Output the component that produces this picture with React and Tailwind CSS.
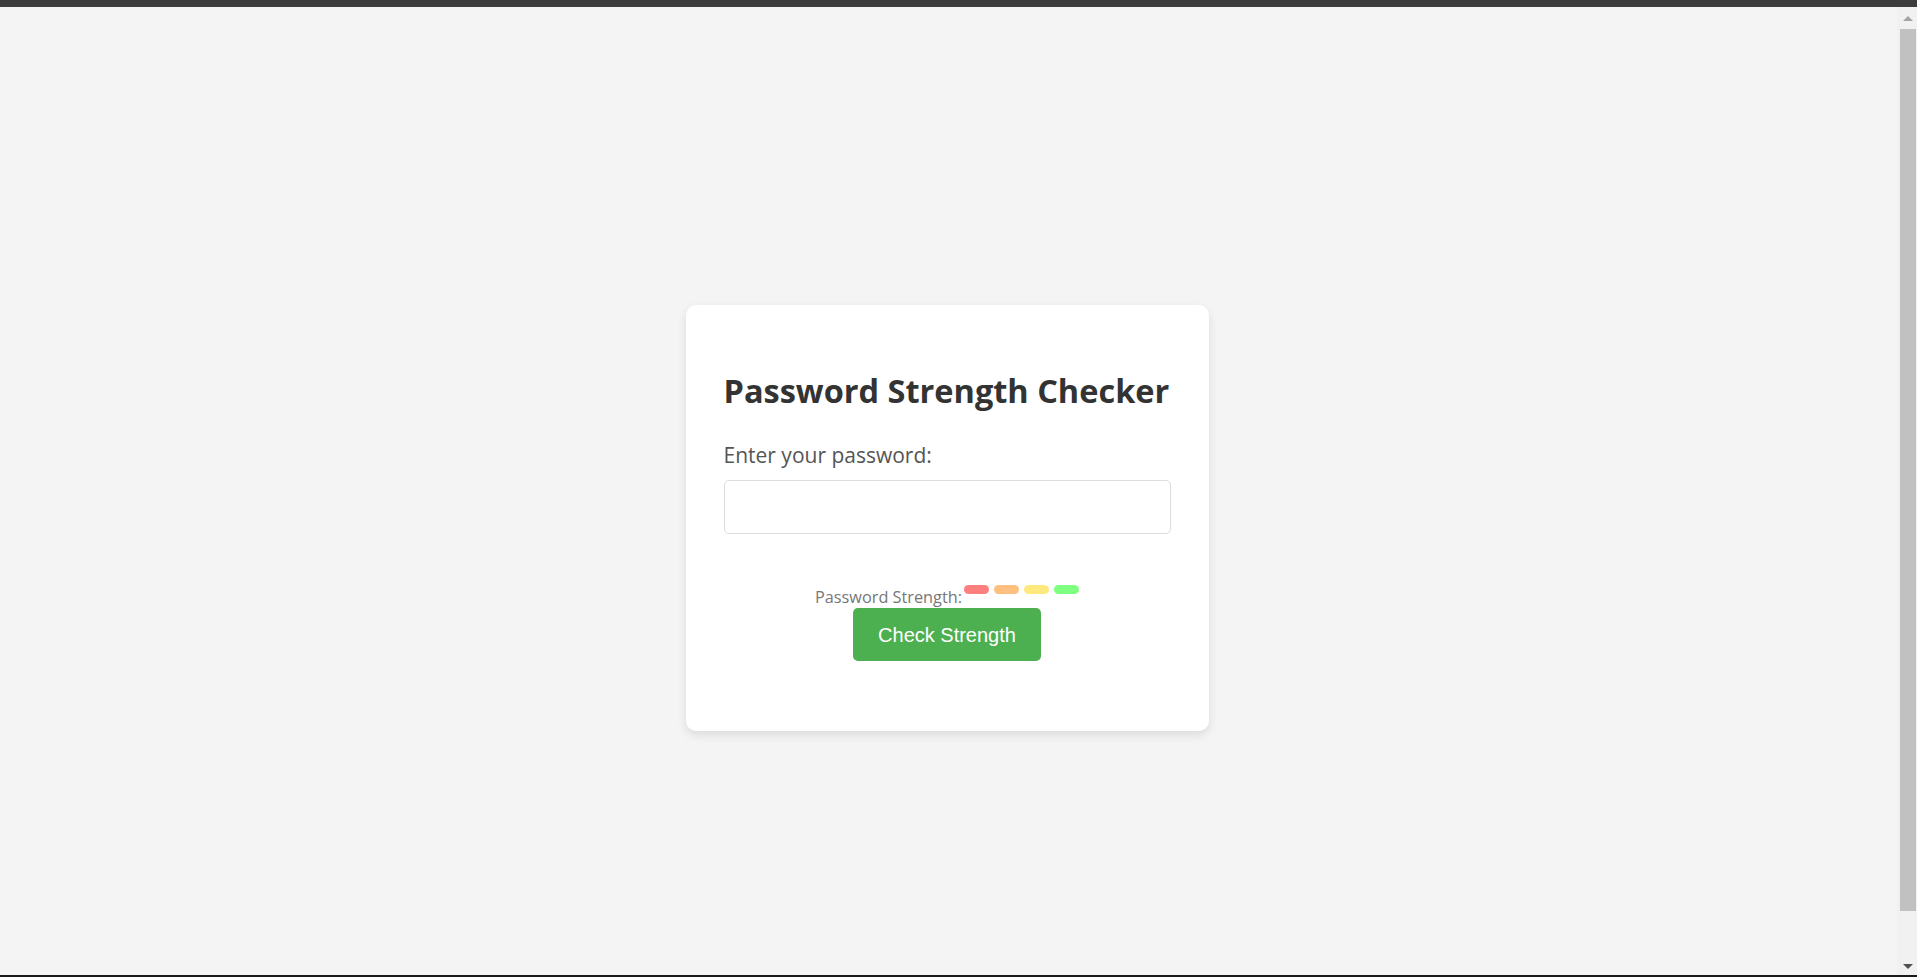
import React, { useState } from 'react';

function App() {
    const [password, setPassword] = useState('');

    return (
        <div className="h-screen flex flex-col overflow-hidden bg-[#f4f4f4]" style={{ fontFamily: '"Open Sans", "Noto Sans", sans-serif' }}>
            <div className="h-[7px] shrink-0 bg-[#3c3c3c]" />
            <div className="flex-1 flex min-h-0">
                <div className="flex-1 flex justify-center items-start pt-[298px] pr-[3px]">
                    <div className="w-[523px] bg-white rounded-[10px] shadow-[0_4px_10px_rgba(0,0,0,0.1)] px-[38px] pt-[66px] pb-[70px]">
                        <h1 className="text-[32.5px] leading-[40px] font-bold text-[#333] whitespace-nowrap">Password Strength Checker</h1>
                        <label htmlFor="password" className="block mt-[30px] text-[21px] leading-[28px] text-[#555]">
                            Enter your password:
                        </label>
                        <input
                            id="password"
                            type="password"
                            value={password}
                            onChange={(e) => setPassword(e.target.value)}
                            className="mt-[11px] block w-full h-[54px] border border-[#dddddd] rounded-[5px] px-[10px] text-[16px] outline-none"
                        />
                        <div className="mt-[51px] flex justify-center items-start h-[22px]">
                            <span className="mt-[2px] text-[16.3px] leading-[20px] text-[#777]">Password Strength:</span>
                            <div className="flex gap-[5px] ml-[2px]">
                                <div className="w-[25px] h-[9px] rounded-full bg-[#ff7f7f]" />
                                <div className="w-[25px] h-[9px] rounded-full bg-[#ffbf7f]" />
                                <div className="w-[25px] h-[9px] rounded-full bg-[#ffe97f]" />
                                <div className="w-[25px] h-[9px] rounded-full bg-[#7fff7f]" />
                            </div>
                        </div>
                        <div className="mt-[1px] flex justify-center">
                            <button
                                type="button"
                                className="h-[53px] px-[25px] rounded-[5px] bg-[#4caf50] text-white text-[20px]"
                                style={{ fontFamily: '"Liberation Sans", Arial, sans-serif' }}
                            >
                                Check Strength
                            </button>
                        </div>
                    </div>
                </div>
                {/* scrollbar */}
                <div className="w-[20px] shrink-0 bg-[#f1f1f1] flex flex-col items-center">
                    <div className="h-[22px] flex items-center justify-center pl-[2px]">
                        <div className="w-0 h-0 border-l-[5px] border-r-[5px] border-b-[5px] border-l-transparent border-r-transparent border-b-[#a3a3a3]" />
                    </div>
                    <div className="w-[16px] ml-[2px] h-[882px] bg-[#c1c1c1]" />
                    <div className="flex-1 flex items-end justify-center pb-[6px] pl-[2px]">
                        <div className="w-0 h-0 border-l-[5px] border-r-[5px] border-t-[5px] border-l-transparent border-r-transparent border-t-[#505050]" />
                    </div>
                </div>
            </div>
            <div className="h-[2px] shrink-0 bg-[#1a1a1a]" />
        </div>
    );
}

export default App;
